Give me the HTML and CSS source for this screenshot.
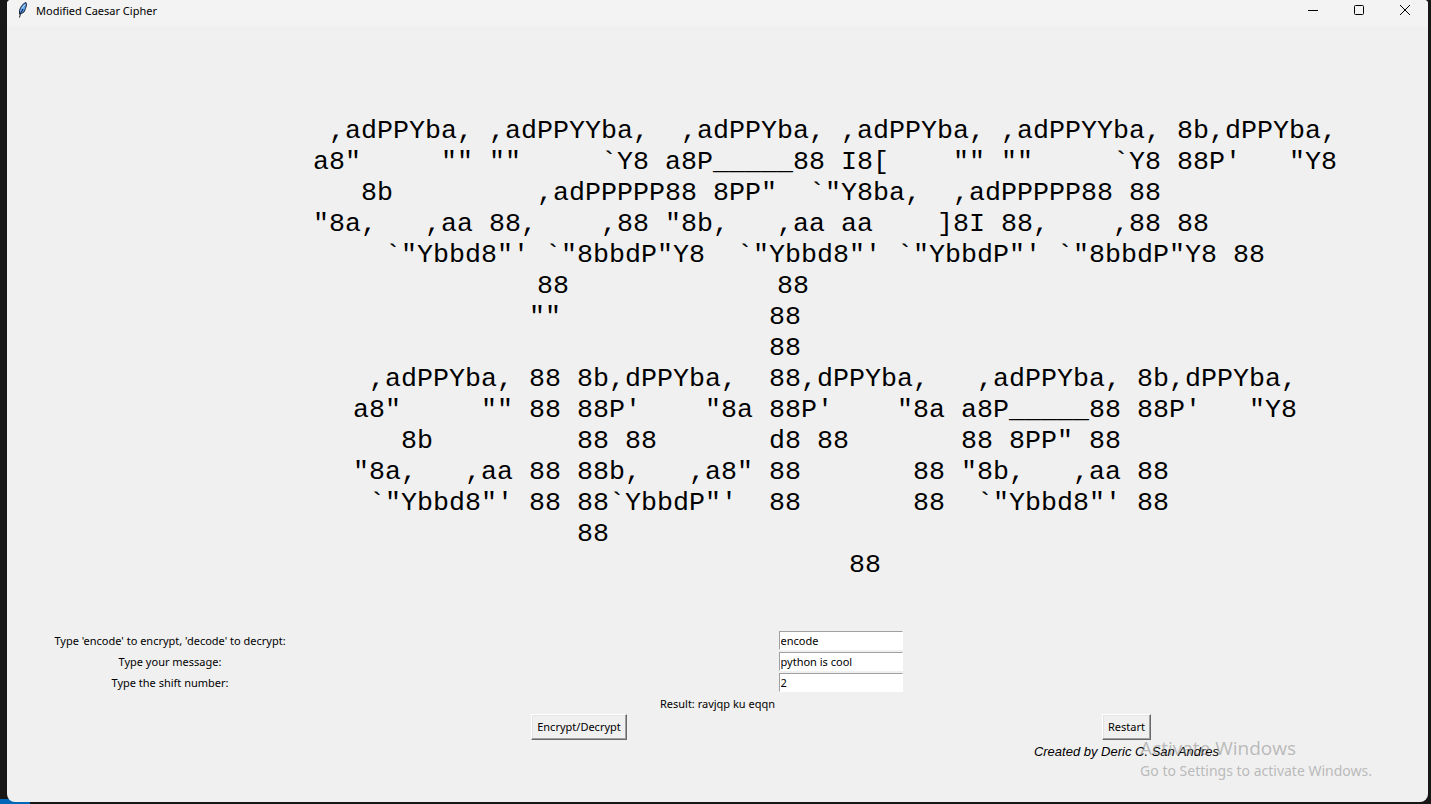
FILE: index.html
```html
<!DOCTYPE html>
<html lang="en">
<head>
<meta charset="utf-8">
<title>Modified Caesar Cipher</title>
<link rel="stylesheet" href="styles.css">
</head>
<body>
<div class="window">
  <header class="titlebar">
    <svg class="feather" width="12" height="18" viewBox="0 0 12 18">
      <path d="M9 1.500C6 2.500 3.500 5.500 2.500 9.500L2.500 13 4.500 12.500 7 11 8.500 7.500 9.500 4Z" fill="#5aa0ee" stroke="#1a2638" stroke-width="1"/>
      <path d="M6 8L5 10 3.500 12.500 2.500 16.500" fill="none" stroke="#0c1626" stroke-width="1"/>
      <path d="M8 3.500L5 7.500" fill="none" stroke="#b5d8ff" stroke-width="1"/>
    </svg>
    <h1 class="title">Modified Caesar Cipher</h1>
    <div class="controls">
      <button class="control" type="button" aria-label="Minimize"><svg width="10" height="10" viewBox="0 0 10 10"><path d="M0 5.500H10"/></svg></button>
      <button class="control" type="button" aria-label="Maximize"><svg width="10" height="10" viewBox="0 0 10 10"><rect x="0.500" y="0.500" width="9" height="9" rx="1"/></svg></button>
      <button class="control" type="button" aria-label="Close"><svg width="10" height="10" viewBox="0 0 10 10"><path d="M0 0L10 10M10 0L0 10"/></svg></button>
    </div>
  </header>
  <main class="content">
    <div class="banner">
<pre class="art"> ,adPPYba, ,adPPYYba,  ,adPPYba, ,adPPYba, ,adPPYYba, 8b,dPPYba,
a8"     "" ""     `Y8 a8P_____88 I8[    "" ""     `Y8 88P'   "Y8
   8b         ,adPPPPP88 8PP"  `"Y8ba,  ,adPPPPP88 88
"8a,   ,aa 88,    ,88 "8b,   ,aa aa    ]8I 88,    ,88 88</pre>
<pre class="art art-nudged">    `"Ybbd8"' `"8bbdP"Y8  `"Ybbd8"' `"YbbdP"' `"8bbdP"Y8 88</pre>
<pre class="art">              88             88</pre>
<pre class="art art-lower">           ""             88
                          88
 ,adPPYba, 88 8b,dPPYba,  88,dPPYba,   ,adPPYba, 8b,dPPYba,
a8"     "" 88 88P'    "8a 88P'    "8a a8P_____88 88P'   "Y8
   8b         88 88       d8 88       88 8PP" 88
"8a,   ,aa 88 88b,   ,a8" 88       88 "8b,   ,aa 88
 `"Ybbd8"' 88 88`YbbdP"'  88       88  `"Ybbd8"' 88
              88
                               88</pre>
    </div>
    <form class="form">
      <div class="row">
        <label class="label" for="mode">Type 'encode' to encrypt, 'decode' to decrypt:</label>
        <input class="entry" id="mode" type="text" value="encode">
      </div>
      <div class="row">
        <label class="label" for="message">Type your message:</label>
        <input class="entry" id="message" type="text" value="python is cool">
      </div>
      <div class="row">
        <label class="label" for="shift">Type the shift number:</label>
        <input class="entry" id="shift" type="text" value="2">
      </div>
      <output class="result" for="mode message shift">Result: ravjqp ku eqqn</output>
      <div class="actions">
        <button class="button run" type="button">Encrypt/Decrypt</button>
        <button class="button restart" type="reset">Restart</button>
        <p class="credit">Created by Deric C. San Andres</p>
      </div>
    </form>
  </main>
  <aside class="watermark">
    <p class="watermark-title">Activate Windows</p>
    <p class="watermark-text">Go to Settings to activate Windows.</p>
  </aside>
</div>
</body>
</html>
```

FILE: styles.css
```css
* {
  box-sizing: border-box;
}

body {
  margin: 0;
  min-height: 100vh;
  display: flex;
  padding: 0 3px 2px 7px;
  background: linear-gradient(#0067b8, #0067b8) left bottom / 30px 5px no-repeat, #171717;
  color: #000;
  font: 11px/18px "Noto Sans", "Open Sans", sans-serif;
}

.window {
  position: relative;
  flex: 1;
  display: flex;
  flex-direction: column;
  border-radius: 4px 4px 8px 8px;
  background: #f0f0f0;
  overflow: hidden;
}

.titlebar {
  display: flex;
  align-items: center;
  height: 26px;
  padding: 0 0 6px 10px;
  background: #f3f3f3;
}

.feather {
  display: block;
}

.title {
  margin: 2px 0 0 7px;
  font-size: 11px;
  font-weight: 400;
}

.controls {
  display: flex;
  margin-left: auto;
}

.control {
  display: flex;
  align-items: center;
  justify-content: center;
  width: 46px;
  height: 20px;
  padding: 0;
  border: 0;
  background: none;
}

.control svg {
  fill: none;
  stroke: #000;
  stroke-width: 1;
}

.content {
  padding-top: 90px;
}

.banner {
  display: grid;
  justify-content: center;
  justify-items: start;
  padding-left: 215px;
}

.art {
  margin: 0;
  font: 20pt/31px "Liberation Mono", monospace;
}

/* Half a character cell */
.art-nudged {
  margin-left: 8px;
}

/* Two and a half character cells */
.art-lower {
  margin-left: 40px;
}

.form {
  display: flex;
  flex-direction: column;
  margin-top: 49px;
}

.row {
  display: grid;
  grid-template-columns: 326fr 1015fr 80fr;
  align-items: center;
  justify-items: center;
  height: 21px;
}

.entry {
  width: 124px;
  height: 19px;
  padding: 0 1px;
  border: 1px solid #fff;
  border-top-color: #a0a0a0;
  border-left-color: #a0a0a0;
  background: #fff;
  color: #000;
  font: inherit;
}

.result {
  height: 21px;
  line-height: 21px;
  text-align: center;
}

.actions {
  display: grid;
  grid-template-columns: 326fr 492fr 603fr;
  justify-items: center;
}

.button {
  height: 26px;
  padding: 0 5px;
  border: 1px solid;
  border-color: #fff #696969 #696969 #fff;
  box-shadow: inset -1px -1px #a0a0a0, inset 1px 1px #e3e3e3;
  background: #f0f0f0;
  color: #000;
  font: inherit;
}

.run {
  grid-column: 2;
}

.restart {
  grid-column: 3;
}

.credit {
  grid-column: 3;
  margin: 2px 0 0;
  font: italic 13px/20px "Liberation Sans", Arial, sans-serif;
}

.watermark {
  position: absolute;
  right: 56px;
  bottom: 20px;
  color: rgba(130, 130, 130, 0.5);
  pointer-events: none;
}

.watermark p {
  margin: 0;
}

.watermark-title {
  font-size: 19px;
  line-height: 24px;
  font-family: "Open Sans", sans-serif;
}

.watermark-text {
  font-size: 14px;
  line-height: 22px;
}
```
